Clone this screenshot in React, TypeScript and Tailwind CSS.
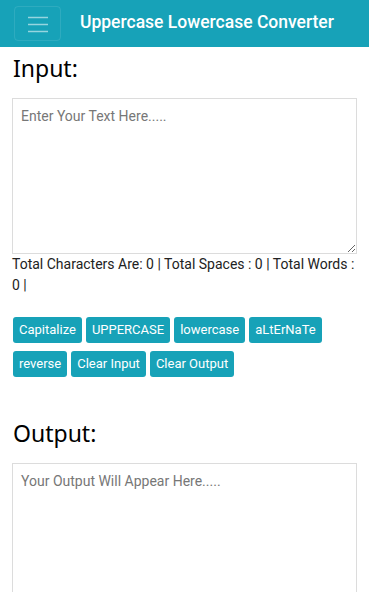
import React from "react";

const buttons1 = ["Capitalize", "UPPERCASE", "lowercase", "aLtErNaTe"];
const buttons2 = ["reverse", "Clear Input", "Clear Output"];

function Btn({ label }: { label: string }) {
  return (
    <button className="h-[26px] px-[6px] rounded-[3px] bg-[#17a2b8] text-white text-[13px] leading-[26px] whitespace-nowrap">
      {label}
    </button>
  );
}

export default function App() {
  const roboto = { fontFamily: "Roboto, 'Liberation Sans', sans-serif" };
  const noto = { fontFamily: "'Noto Sans', 'Open Sans', sans-serif" };
  return (
    <div className="min-h-[592px] bg-white text-[#212529]" style={roboto}>
      <nav className="h-[47px] bg-[#17a2b8] flex items-center pl-[14px]">
        <button className="w-[47px] h-[35px] border border-white/10 rounded-[4px] flex items-center justify-center">
          <svg width="22" height="18" viewBox="0 0 22 18">
            <path d="M1 2.5h20M1 9.5h20M1 16.5h20" stroke="rgba(255,255,255,0.55)" strokeWidth="1.6" />
          </svg>
        </button>
        <span className="ml-[19px] mb-[4px] text-white text-[17.5px] font-medium leading-[24px] whitespace-nowrap">
          Uppercase Lowercase Converter
        </span>
      </nav>
      <div className="px-3">
        <h2 className="mt-[7px] mb-4 pl-px text-[23px] font-normal leading-[28px] text-black" style={noto}>
          Input:
        </h2>
        <textarea
          className="block w-full h-[156px] border border-[#dcdcdc] px-2 py-[7px] text-[14px] leading-[21px] placeholder:text-[#777] outline-none"
          placeholder="Enter Your Text Here....."
        />
        <p className="text-[14px] leading-[21px] text-[#222]">
          Total Characters Are: 0 | Total Spaces : 0 | Total Words : 0 |
        </p>
        <div className="mt-[21px] flex flex-col gap-2 pl-px">
          <div className="flex gap-1">
            {buttons1.map((b) => (
              <Btn key={b} label={b} />
            ))}
          </div>
          <div className="flex gap-1">
            {buttons2.map((b) => (
              <Btn key={b} label={b} />
            ))}
          </div>
        </div>
        <h2 className="mt-[42px] mb-4 pl-px text-[23px] font-normal leading-[28px] text-black" style={noto}>
          Output:
        </h2>
        <textarea
          className="block w-full h-[156px] border border-[#dcdcdc] px-2 py-[7px] text-[14px] leading-[21px] placeholder:text-[#777] outline-none"
          placeholder="Your Output Will Appear Here....."
        />
      </div>
    </div>
  );
}
